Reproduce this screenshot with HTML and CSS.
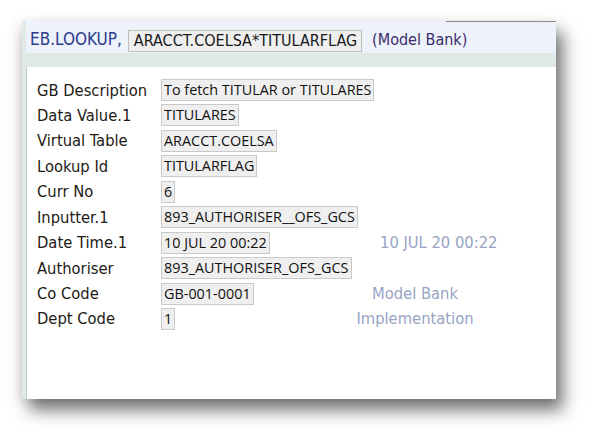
FILE: index.html
```html
<!DOCTYPE html>
<html>
<head>
<meta charset="utf-8">
<link rel="stylesheet" href="styles.css">
</head>
<body>
<div class="window">
  <div class="header">
    <span class="app">EB.LOOKUP,</span>
    <span class="idbox">ARACCT.COELSA*TITULARFLAG</span>
    <span class="company">(Model Bank)</span>
  </div>
  <div class="strip"></div>
  <div class="content">
    <div class="grid">
      <div class="label">GB Description</div><div class="value"><span class="box">To fetch TITULAR or TITULARES</span></div>
      <div class="label">Data Value.1</div><div class="value"><span class="box">TITULARES</span></div>
      <div class="label">Virtual Table</div><div class="value"><span class="box">ARACCT.COELSA</span></div>
      <div class="label">Lookup Id</div><div class="value"><span class="box">TITULARFLAG</span></div>
      <div class="label">Curr No</div><div class="value"><span class="box">6</span></div>
      <div class="label">Inputter.1</div><div class="value"><span class="box">893_AUTHORISER__OFS_GCS</span></div>
      <div class="label">Date Time.1</div><div class="value"><span class="box">10 JUL 20 00:22</span></div><div class="extra date">10 JUL 20 00:22</div>
      <div class="label">Authoriser</div><div class="value"><span class="box">893_AUTHORISER_OFS_GCS</span></div>
      <div class="label">Co Code</div><div class="value"><span class="box">GB-001-0001</span></div><div class="extra company-name">Model Bank Implementation</div>
      <div class="label">Dept Code</div><div class="value"><span class="box">1</span></div>
    </div>
  </div>
</div>
</body>
</html>
```

FILE: styles.css
```css
html, body {
  margin: 0;
  padding: 0;
  background: #ffffff;
}

body {
  font-family: "DejaVu Sans Condensed", "DejaVu Sans", sans-serif;
  height: 432px;
}

.window {
  position: relative;
  margin: 21px 0 0 22px;
  width: 534px;
  height: 378px;
  background: #dfeae6;
  display: flex;
  flex-direction: column;
  box-shadow: 7px 11px 16px rgba(0, 0, 0, 0.55), -4px 2px 12px rgba(0, 0, 0, 0.08);
}

.window::after {
  content: "";
  position: absolute;
  top: 0;
  right: 0;
  width: 110px;
  height: 1px;
  background: #8a8a8a;
}

.header {
  margin-left: 4px;
  height: 32px;
  background: #eef2fb;
  display: flex;
  align-items: center;
  padding-left: 4px;
  padding-top: 4px;
  box-sizing: border-box;
}

.app {
  font-size: 17px;
  color: #2c3b8e;
}

.idbox {
  margin-left: 6px;
  font-size: 16px;
  color: #1a1a1a;
  background: #efefef;
  border: 1px solid #bdbdbd;
  padding: 0 4px 0 5px;
  line-height: 20px;
  align-self: flex-end;
  margin-bottom: 1px;
}

.company {
  margin-left: 10px;
  font-size: 16px;
  color: #3a2c6c;
}

.strip {
  height: 14px;
}

.content {
  flex: 1;
  margin-left: 4px;
  border-left: 1px solid #c5cdca;
  background: #ffffff;
  padding: 12px 0 0 10px;
}

.grid {
  display: grid;
  grid-template-columns: 124px 192px 124px;
  grid-auto-rows: 22px;
  row-gap: 3.44px;
  align-items: center;
}

.label {
  grid-column: 1;
  font-size: 16.4px;
  color: #231a14;
  white-space: nowrap;
}

.value {
  grid-column: 2;
  white-space: nowrap;
}

.box {
  display: inline-block;
  font-family: "Open Sans", sans-serif;
  font-size: 14.4px;
  line-height: 20px;
  color: #111111;
  background: #efefef;
  border: 1px solid #c9c9c9;
  padding: 0 2px;
  vertical-align: top;
}

.extra {
  grid-column: 3;
  font-size: 16.4px;
  color: #97a4c4;
  white-space: nowrap;
}

.date {
  padding-left: 27px;
}

.company-name {
  grid-row: span 2;
  align-self: stretch;
  white-space: normal;
  text-align: center;
  line-height: 25.44px;
  margin-top: -1.7px;
}
```
